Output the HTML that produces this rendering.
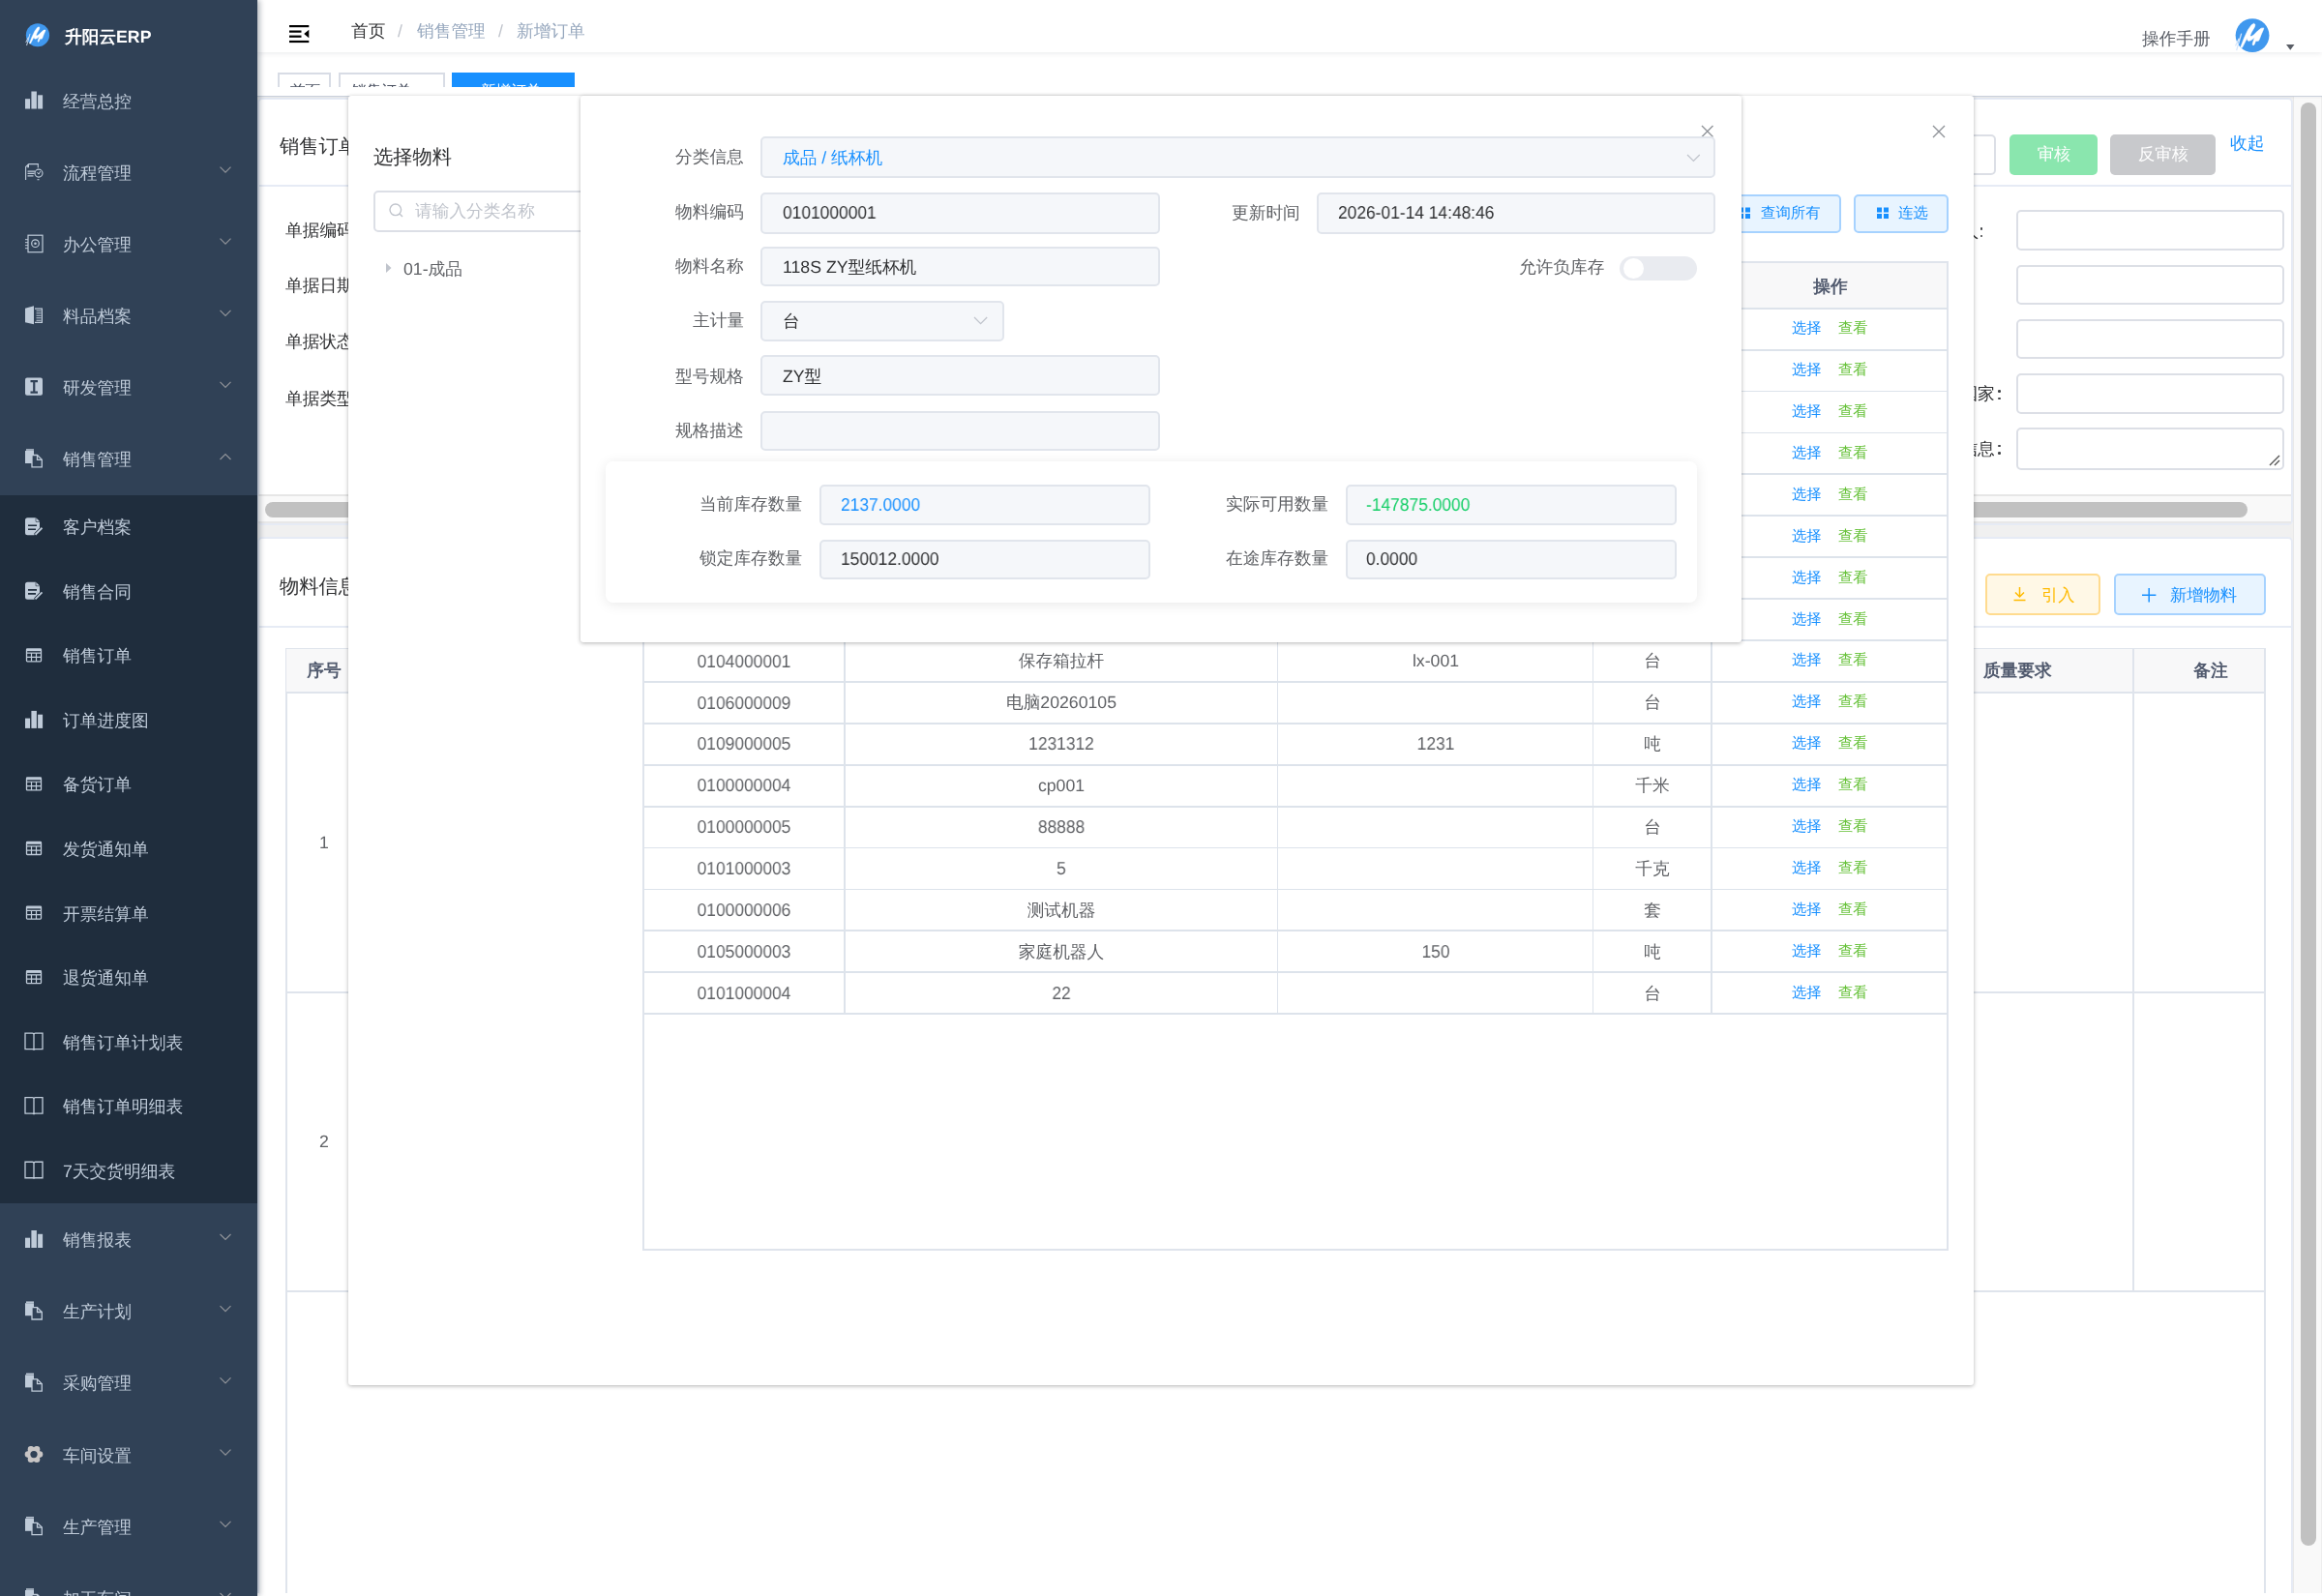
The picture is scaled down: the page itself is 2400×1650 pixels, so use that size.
<!DOCTYPE html>
<html><head><meta charset="utf-8">
<style>
*{box-sizing:border-box;margin:0;padding:0}
html,body{width:2400px;height:1650px;overflow:hidden;background:#fff;font-family:"Liberation Sans",sans-serif;font-size:18px;color:#606266}
.a{position:absolute}
.t{position:absolute;white-space:nowrap}
svg{overflow:visible}
.t{will-change:transform;text-rendering:geometricPrecision}
</style></head><body>

<div class="a" style="left:266px;top:0px;width:2134.00px;height:1650.00px;background:#f0f0f0"></div>
<div class="a" style="left:266px;top:100.5px;width:2103.60px;height:442.50px;background:#fff;border:2px solid #e6ebf5;border-radius:5px"></div>
<div class="t" style="left:289.4px;top:137.00px;height:30px;line-height:30px;font-size:20.3px;color:#303133;font-weight:normal;">销售订单</div>
<div class="a" style="left:267.4px;top:191px;width:2100.60px;height:2.00px;background:#e6ebf5"></div>
<div class="t" style="left:294.7px;top:223.30px;height:30px;line-height:30px;font-size:17.7px;color:#303133;font-weight:normal;">单据编码</div>
<div class="t" style="left:294.7px;top:279.70px;height:30px;line-height:30px;font-size:17.7px;color:#303133;font-weight:normal;">单据日期</div>
<div class="t" style="left:294.7px;top:338.00px;height:30px;line-height:30px;font-size:17.7px;color:#303133;font-weight:normal;">单据状态</div>
<div class="t" style="left:294.7px;top:396.70px;height:30px;line-height:30px;font-size:17.7px;color:#303133;font-weight:normal;">单据类型</div>
<div class="a" style="left:1990px;top:139px;width:73.00px;height:42.00px;background:#fff;border:2px solid #dcdfe6;border-radius:5px"></div>
<div class="a" style="left:2077px;top:139px;width:91.00px;height:42.00px;background:#8ae6ae;border-radius:5px"></div>
<div class="t" style="left:1822.5px;width:600px;top:143.80px;height:30px;line-height:30px;font-size:17.3px;color:#fff;font-weight:normal;text-align:center;">审核</div>
<div class="a" style="left:2181px;top:139px;width:109.00px;height:42.00px;background:#c8c9cc;border-radius:5px"></div>
<div class="t" style="left:1935.5px;width:600px;top:143.80px;height:30px;line-height:30px;font-size:17.3px;color:#fff;font-weight:normal;text-align:center;">反审核</div>
<div class="t" style="left:2305px;top:132.60px;height:30px;line-height:30px;font-size:17.8px;color:#1890ff;font-weight:normal;">收起</div>
<div class="a" style="left:2083.5px;top:216.7px;width:277.80px;height:42.30px;background:#fff;border:2px solid #dcdfe6;border-radius:5px"></div>
<div class="a" style="left:2083.5px;top:273.6px;width:277.80px;height:41.40px;background:#fff;border:2px solid #dcdfe6;border-radius:5px"></div>
<div class="a" style="left:2083.5px;top:329.6px;width:277.80px;height:41.60px;background:#fff;border:2px solid #dcdfe6;border-radius:5px"></div>
<div class="a" style="left:2083.5px;top:385.6px;width:277.80px;height:42.40px;background:#fff;border:2px solid #dcdfe6;border-radius:5px"></div>
<div class="a" style="left:2083.5px;top:441.6px;width:277.80px;height:44.50px;background:#fff;border:2px solid #dcdfe6;border-radius:5px"></div>
<div class="t" style="right:355px;top:224.00px;height:30px;line-height:30px;font-size:17.7px;color:#303133;font-weight:normal;text-align:right;">负责人</div>
<div class="a" style="left:2046.5px;top:235px;width:2.6px;height:2.6px;border-radius:50%;background:#404246"></div><div class="a" style="left:2046.5px;top:242.5px;width:2.6px;height:2.6px;border-radius:50%;background:#404246"></div>
<div class="t" style="right:338px;top:392.00px;height:30px;line-height:30px;font-size:17.7px;color:#303133;font-weight:normal;text-align:right;">所属国家</div>
<div class="a" style="left:2065px;top:403px;width:2.6px;height:2.6px;border-radius:50%;background:#404246"></div><div class="a" style="left:2065px;top:410.5px;width:2.6px;height:2.6px;border-radius:50%;background:#404246"></div>
<div class="t" style="right:338px;top:448.50px;height:30px;line-height:30px;font-size:17.7px;color:#303133;font-weight:normal;text-align:right;">备注信息</div>
<div class="a" style="left:2065px;top:459.5px;width:2.6px;height:2.6px;border-radius:50%;background:#404246"></div><div class="a" style="left:2065px;top:467px;width:2.6px;height:2.6px;border-radius:50%;background:#404246"></div>
<svg class="a" style="left:2345px;top:470px;" width="12" height="12" viewBox="0 0 12 12"><path d="M1 11 L11 1 M6 11 L11 6" stroke="#555" stroke-width="1.4"/></svg>
<div class="a" style="left:267.4px;top:511px;width:2100.60px;height:30.00px;background:#f9f9f9;border-top:2px solid #e6e6e6;border-bottom:2px solid #e8e8e8"></div>
<div class="a" style="left:274px;top:519px;width:2049.00px;height:16.00px;background:#c1c1c1;border-radius:8px"></div>
<div class="a" style="left:266px;top:555.2px;width:2103.60px;height:1144.80px;background:#fff;border:2px solid #e6ebf5;border-radius:5px"></div>
<div class="t" style="left:289.3px;top:592.40px;height:30px;line-height:30px;font-size:20.3px;color:#303133;font-weight:normal;">物料信息</div>
<div class="a" style="left:267.4px;top:647px;width:2100.60px;height:2.00px;background:#e6ebf5"></div>
<div class="a" style="left:2051.6px;top:593.3px;width:119.90px;height:43.00px;background:#fff8e6;border:2px solid #ffdb8f;border-radius:5px"></div>
<svg class="a" style="left:2080.6px;top:606px;" width="13" height="16" viewBox="0 0 13 16"><path d="M6.5 1 V11 M2 6.5 L6.5 11 L11 6.5 M0.5 14.5 H12.5" stroke="#ffba00" stroke-width="1.5" fill="none"/></svg>
<div class="t" style="left:2109.8px;top:600.00px;height:30px;line-height:30px;font-size:17.3px;color:#ffba00;font-weight:normal;">引入</div>
<div class="a" style="left:2185.4px;top:593.3px;width:156.20px;height:43.00px;background:#e8f4ff;border:2px solid #a6d2ff;border-radius:5px"></div>
<svg class="a" style="left:2214.4px;top:607.5px;" width="14.4" height="14.4" viewBox="0 0 14.4 14.4"><path d="M7.2 0 V14.4 M0 7.2 H14.4" stroke="#1890ff" stroke-width="1.5" fill="none"/></svg>
<div class="t" style="left:2243.4px;top:600.00px;height:30px;line-height:30px;font-size:17.3px;color:#1890ff;font-weight:normal;">新增物料</div>
<div class="a" style="left:295px;top:669.8px;width:2046.60px;height:1030.20px;border:2px solid #dfe4ec;background:#fff"></div>
<div class="a" style="left:296.4px;top:671.2px;width:2043.80px;height:44.80px;background:#f8f8f9"></div>
<div class="a" style="left:296.4px;top:715px;width:2043.80px;height:2.00px;background:#dfe4ec"></div>
<div class="a" style="left:296.4px;top:1024.5px;width:2043.80px;height:2.00px;background:#dfe4ec"></div>
<div class="a" style="left:296.4px;top:1333.6px;width:2043.80px;height:2.00px;background:#dfe4ec"></div>
<div class="a" style="left:2203.8px;top:671.2px;width:2.00px;height:662.80px;background:#dfe4ec"></div>
<div class="a" style="left:373.7px;top:671.2px;width:2.00px;height:662.80px;background:#dfe4ec"></div>
<div class="t" style="left:34.60000000000002px;width:600px;top:677.60px;height:30px;line-height:30px;font-size:17.7px;color:#515a6e;font-weight:bold;text-align:center;">序号</div>
<div class="t" style="left:2050px;top:677.60px;height:30px;line-height:30px;font-size:17.7px;color:#515a6e;font-weight:bold;">质量要求</div>
<div class="t" style="left:1985px;width:600px;top:677.60px;height:30px;line-height:30px;font-size:17.7px;color:#515a6e;font-weight:bold;text-align:center;">备注</div>
<div class="t" style="left:34.60000000000002px;width:600px;top:855.60px;height:30px;line-height:30px;font-size:17.7px;color:#606266;font-weight:normal;text-align:center;">1</div>
<div class="t" style="left:34.60000000000002px;width:600px;top:1164.50px;height:30px;line-height:30px;font-size:17.7px;color:#606266;font-weight:normal;text-align:center;">2</div>
<div class="a" style="left:266px;top:1647px;width:2134.00px;height:3.00px;background:#fff"></div>
<div class="a" style="left:2370.4px;top:99.5px;width:29.60px;height:1547.50px;background:#f9f9f9;border-left:1.6px solid #e8e8e8;border-right:1.6px solid #eeeeee"></div>
<div class="a" style="left:2378.2px;top:106px;width:15.50px;height:1492.00px;background:#c1c1c1;border-radius:8px"></div>
<div class="a" style="left:266px;top:54px;width:2134.00px;height:45.80px;background:#fff;border-bottom:1.6px solid #c9d0db;box-shadow:0 1px 2px rgba(0,21,41,.05)"></div>
<div class="a" style="left:266px;top:54px;width:2134px;height:36px;overflow:hidden">
<div class="a" style="left:21px;top:21px;width:55px;height:34px;border:2px solid #d8dce5;background:#fff"></div>
<div class="t" style="left:33.8px;top:31px;height:20px;line-height:20px;font-size:15.6px;color:#495060">首页</div>
<div class="a" style="left:84px;top:21px;width:110px;height:34px;border:2px solid #d8dce5;background:#fff"></div>
<div class="t" style="left:96.7px;top:31px;height:20px;line-height:20px;font-size:15.6px;color:#495060">销售订单</div>
<div class="a" style="left:200.7px;top:21px;width:127.3px;height:34px;background:#1890ff"></div>
<div class="a" style="left:217.5px;top:36px;width:10.5px;height:10.5px;border-radius:50%;background:#fff"></div>
<div class="t" style="left:230.7px;top:31px;height:20px;line-height:20px;font-size:15.6px;color:#fff">新增订单</div>
</div>
<div class="a" style="left:266px;top:0px;width:2134.00px;height:54.00px;background:#fff;box-shadow:0 1px 6px rgba(0,21,41,.09)"></div>
<svg class="a" style="left:298.7px;top:25.8px;" width="20.3" height="18.1" viewBox="0 0 20.3 18.1"><rect x="0" y="0" width="20.3" height="2.2" fill="#000"/><rect x="0" y="5.5" width="12.5" height="2.2" fill="#000"/><rect x="0" y="10.6" width="12.5" height="2.2" fill="#000"/><rect x="0" y="15.9" width="20.3" height="2.2" fill="#000"/><path d="M20.3 4.8 V13.3 L15.2 9 Z" fill="#000"/></svg>
<div class="t" style="left:363.3px;top:16.80px;height:30px;line-height:30px;font-size:17.7px;color:#303133;font-weight:normal;">首页</div>
<div class="t" style="left:410.7px;top:16.80px;height:30px;line-height:30px;font-size:17.7px;color:#c0c4cc;font-weight:normal;">/</div>
<div class="t" style="left:430.5px;top:16.80px;height:30px;line-height:30px;font-size:17.7px;color:#97a8be;font-weight:normal;">销售管理</div>
<div class="t" style="left:515px;top:16.80px;height:30px;line-height:30px;font-size:17.7px;color:#c0c4cc;font-weight:normal;">/</div>
<div class="t" style="left:534px;top:16.80px;height:30px;line-height:30px;font-size:17.7px;color:#97a8be;font-weight:normal;">新增订单</div>
<div class="t" style="left:2214px;top:24.90px;height:30px;line-height:30px;font-size:17.7px;color:#5a5e66;font-weight:normal;">操作手册</div>
<svg class="a" style="left:0px;top:0px;" width="2400" height="60" viewBox="0 0 2400 60"><circle cx="2328.06" cy="36.6" r="17.4" fill="#4098ee"/><g transform="translate(2328.06,36.6) scale(1.4380165289256197)"><path d="M-8.64,8.8 L-5.97,1.89 L-3.14,-4.08 L-0.63,-7.54 L1.1,-8.56 L2.04,-7.7 L1.57,-5.97 L-0.63,-2.2 L-1.57,0 L-0.94,0.86 L0.79,-0.16 L3.93,-3.3 L6.28,-5.18 L8.17,-5.34 L7.86,-4.08 L6.28,-0.47 L5.03,2.83 L4.4,3.93 L2.36,4.08 L1.41,6.6 L0.63,7.23 L0,6.6 L0.63,4.24 L1.57,1.41 L-0.79,3.46 L-2.67,4.08 L-3.61,3.46 L-3.77,1.89 L-5.81,5.81 L-7.38,8.8 Z" fill="#fff" stroke="#fff" stroke-width="0.4" stroke-linejoin="round"/><path d="M-7.9 -1.4 L-11.4 10.8 M-9.6 2.2 L-12.2 7.6" stroke="#d6e7fb" stroke-width="0.9" fill="none"/></g></svg>
<svg class="a" style="left:2362.5px;top:46.3px;" width="8.5" height="5.7" viewBox="0 0 8.5 5.7"><path d="M0 0 H8.5 L4.25 5.7 Z" fill="#5a5e66"/></svg>
<div class="a" style="left:0px;top:0px;width:266.00px;height:1650.00px;background:#304156;box-shadow:2px 0 6px rgba(0,21,41,.35)"></div>
<div class="a" style="left:0px;top:512px;width:266.00px;height:732.00px;background:#1f2d3d"></div>
<svg class="a" style="left:0px;top:0px;" width="266" height="70" viewBox="0 0 266 70"><circle cx="38.95" cy="36.25" r="12.1" fill="#4098ee"/><g transform="translate(38.95,36.25) scale(1.0)"><path d="M-8.64,8.8 L-5.97,1.89 L-3.14,-4.08 L-0.63,-7.54 L1.1,-8.56 L2.04,-7.7 L1.57,-5.97 L-0.63,-2.2 L-1.57,0 L-0.94,0.86 L0.79,-0.16 L3.93,-3.3 L6.28,-5.18 L8.17,-5.34 L7.86,-4.08 L6.28,-0.47 L5.03,2.83 L4.4,3.93 L2.36,4.08 L1.41,6.6 L0.63,7.23 L0,6.6 L0.63,4.24 L1.57,1.41 L-0.79,3.46 L-2.67,4.08 L-3.61,3.46 L-3.77,1.89 L-5.81,5.81 L-7.38,8.8 Z" fill="#fff" stroke="#fff" stroke-width="0.4" stroke-linejoin="round"/><path d="M-7.9 -1.4 L-11.4 10.8 M-9.6 2.2 L-12.2 7.6" stroke="#d6e7fb" stroke-width="0.9" fill="none"/></g></svg>
<div class="t" style="left:67px;top:23.00px;height:30px;line-height:30px;font-size:17.7px;color:#fff;font-weight:bold;">升阳云ERP</div>
<div class="t" style="left:65px;top:89.50px;height:30px;line-height:30px;font-size:17.75px;color:#bfcbd9;font-weight:normal;">经营总控</div>
<div class="t" style="left:65px;top:163.60px;height:30px;line-height:30px;font-size:17.75px;color:#bfcbd9;font-weight:normal;">流程管理</div>
<div class="t" style="left:65px;top:237.70px;height:30px;line-height:30px;font-size:17.75px;color:#bfcbd9;font-weight:normal;">办公管理</div>
<div class="t" style="left:65px;top:311.80px;height:30px;line-height:30px;font-size:17.75px;color:#bfcbd9;font-weight:normal;">料品档案</div>
<div class="t" style="left:65px;top:385.90px;height:30px;line-height:30px;font-size:17.75px;color:#bfcbd9;font-weight:normal;">研发管理</div>
<div class="t" style="left:65px;top:460.00px;height:30px;line-height:30px;font-size:17.75px;color:#bfcbd9;font-weight:normal;">销售管理</div>
<div class="t" style="left:65px;top:530.25px;height:30px;line-height:30px;font-size:17.75px;color:#bfcbd9;font-weight:normal;">客户档案</div>
<div class="t" style="left:65px;top:596.80px;height:30px;line-height:30px;font-size:17.75px;color:#bfcbd9;font-weight:normal;">销售合同</div>
<div class="t" style="left:65px;top:663.35px;height:30px;line-height:30px;font-size:17.75px;color:#bfcbd9;font-weight:normal;">销售订单</div>
<div class="t" style="left:65px;top:729.90px;height:30px;line-height:30px;font-size:17.75px;color:#bfcbd9;font-weight:normal;">订单进度图</div>
<div class="t" style="left:65px;top:796.45px;height:30px;line-height:30px;font-size:17.75px;color:#bfcbd9;font-weight:normal;">备货订单</div>
<div class="t" style="left:65px;top:863.00px;height:30px;line-height:30px;font-size:17.75px;color:#bfcbd9;font-weight:normal;">发货通知单</div>
<div class="t" style="left:65px;top:929.55px;height:30px;line-height:30px;font-size:17.75px;color:#bfcbd9;font-weight:normal;">开票结算单</div>
<div class="t" style="left:65px;top:996.10px;height:30px;line-height:30px;font-size:17.75px;color:#bfcbd9;font-weight:normal;">退货通知单</div>
<div class="t" style="left:65px;top:1062.65px;height:30px;line-height:30px;font-size:17.75px;color:#bfcbd9;font-weight:normal;">销售订单计划表</div>
<div class="t" style="left:65px;top:1129.20px;height:30px;line-height:30px;font-size:17.75px;color:#bfcbd9;font-weight:normal;">销售订单明细表</div>
<div class="t" style="left:65px;top:1195.75px;height:30px;line-height:30px;font-size:17.75px;color:#bfcbd9;font-weight:normal;">7天交货明细表</div>
<div class="t" style="left:65px;top:1267.00px;height:30px;line-height:30px;font-size:17.75px;color:#bfcbd9;font-weight:normal;">销售报表</div>
<div class="t" style="left:65px;top:1341.20px;height:30px;line-height:30px;font-size:17.75px;color:#bfcbd9;font-weight:normal;">生产计划</div>
<div class="t" style="left:65px;top:1415.40px;height:30px;line-height:30px;font-size:17.75px;color:#bfcbd9;font-weight:normal;">采购管理</div>
<div class="t" style="left:65px;top:1489.60px;height:30px;line-height:30px;font-size:17.75px;color:#bfcbd9;font-weight:normal;">车间设置</div>
<div class="t" style="left:65px;top:1563.80px;height:30px;line-height:30px;font-size:17.75px;color:#bfcbd9;font-weight:normal;">生产管理</div>
<div class="t" style="left:65px;top:1638.00px;height:30px;line-height:30px;font-size:17.75px;color:#bfcbd9;font-weight:normal;">加工车间</div>
<svg class="a" style="left:0px;top:0px;" width="266" height="1650" viewBox="0 0 266 1650"><rect x="26" y="102.2" width="5.1" height="10.3" fill="#bfcbd9"/><rect x="32.4" y="94.5" width="5.5" height="18" fill="#bfcbd9"/><rect x="39.1" y="98.3" width="5" height="14.2" fill="#bfcbd9"/><path d="M26.6 186.1 v-13.5 l3.2 -3 h9.5 v4" fill="none" stroke="#bfcbd9" stroke-width="1.1"/><rect x="28.2" y="169.9" width="1.8" height="3.4" fill="#bfcbd9"/><path d="M28.5 177.1 h7.5 M28.5 179.4 h7 M28.5 181.9 h6" stroke="#bfcbd9" stroke-width="1.1"/><circle cx="40" cy="179.1" r="4" fill="none" stroke="#bfcbd9" stroke-width="1.1"/><path d="M38.5 178.1 l1.5 2 l1.8 -3" fill="none" stroke="#bfcbd9" stroke-width="1"/><path d="M38.5 185.7 h2" stroke="#bfcbd9" stroke-width="1.1"/><path d="M227.5 172.6 L233.0 178.1 L238.5 172.6" fill="none" stroke="#909399" stroke-width="1.2"/><rect x="29" y="243.2" width="15" height="17.5" fill="none" stroke="#bfcbd9" stroke-width="1.2"/><circle cx="36.5" cy="251.7" r="3.8" fill="none" stroke="#bfcbd9" stroke-width="1.2"/><circle cx="36.5" cy="251.7" r="1.3" fill="#bfcbd9"/><path d="M26 247.7 h3 M26 250.7 h3 M26 253.7 h3 M26 256.7 h3" stroke="#bfcbd9" stroke-width="1"/><path d="M227.5 246.7 L233.0 252.2 L238.5 246.7" fill="none" stroke="#909399" stroke-width="1.2"/><path d="M26 318.8 l9 -2.5 v19 l-9 -2 z" fill="#bfcbd9"/><path d="M36 319.1 h7.4 v14.2 h-7.4" fill="none" stroke="#bfcbd9" stroke-width="1.2"/><path d="M37.5 321.3 h5 M37.5 323.8 h5 M37.5 326.3 h5 M37.5 328.8 h5 M37.5 331.3 h5" stroke="#bfcbd9" stroke-width="1.1"/><path d="M227.5 320.8 L233.0 326.3 L238.5 320.8" fill="none" stroke="#909399" stroke-width="1.2"/><rect x="26" y="390.59999999999997" width="18" height="18.2" rx="2" fill="#bfcbd9"/><path d="M31.5 394.09999999999997 h7.5 M31.5 405.59999999999997 h7.5 M35.25 394.09999999999997 v11.5" stroke="#304156" stroke-width="2.2"/><path d="M227.5 394.9 L233.0 400.4 L238.5 394.9" fill="none" stroke="#909399" stroke-width="1.2"/><path d="M26 466.0 h9 v13 h-9 z" fill="#bfcbd9"/><path d="M27 465.0 h8" stroke="#bfcbd9" stroke-width="1.5"/><path d="M33 470.5 h5.5 l4.8 4.8 v7.5 h-10.3 z" fill="#304156" stroke="#bfcbd9" stroke-width="1.3"/><path d="M38.5 470.5 v4.8 h4.8" fill="none" stroke="#bfcbd9" stroke-width="1.3"/><path d="M227.5 475.0 L233.0 469.5 L238.5 475.0" fill="none" stroke="#909399" stroke-width="1.2"/><path d="M26 537.75 q0 -2.5 2.5 -2.5 h8.5 l4 4 v7 l-5.5 5.5 v1.5 h-7 q-2.5 0 -2.5 -2.5 z" fill="#bfcbd9"/><path d="M37 535.25 v4 h4" fill="#1f2d3d" stroke="#1f2d3d" stroke-width="0.6"/><path d="M37.3 535.45 l3.6 3.6 h-3.6 z" fill="#bfcbd9"/><path d="M29 543.25 h9 M29 547.25 h8" stroke="#1f2d3d" stroke-width="1.7"/><path d="M36.5 552.75 l7 -7" stroke="#1f2d3d" stroke-width="3.2"/><path d="M36.5 552.75 l7 -7" stroke="#bfcbd9" stroke-width="1.8"/><path d="M26 604.3 q0 -2.5 2.5 -2.5 h8.5 l4 4 v7 l-5.5 5.5 v1.5 h-7 q-2.5 0 -2.5 -2.5 z" fill="#bfcbd9"/><path d="M37 601.8 v4 h4" fill="#1f2d3d" stroke="#1f2d3d" stroke-width="0.6"/><path d="M37.3 602.0 l3.6 3.6 h-3.6 z" fill="#bfcbd9"/><path d="M29 609.8 h9 M29 613.8 h8" stroke="#1f2d3d" stroke-width="1.7"/><path d="M36.5 619.3 l7 -7" stroke="#1f2d3d" stroke-width="3.2"/><path d="M36.5 619.3 l7 -7" stroke="#bfcbd9" stroke-width="1.8"/><rect x="27.5" y="670.85" width="15" height="13" rx="0.8" fill="none" stroke="#bfcbd9" stroke-width="1.3"/><path d="M27.5 672.0500000000001 h15" stroke="#bfcbd9" stroke-width="2.2"/><path d="M27.5 675.15 h15 M27.5 679.45 h15 M32.5 675.15 v8.7 M37.5 675.15 v8.7" stroke="#bfcbd9" stroke-width="1.2"/><rect x="26" y="742.6" width="5.1" height="10.3" fill="#bfcbd9"/><rect x="32.4" y="734.9" width="5.5" height="18" fill="#bfcbd9"/><rect x="39.1" y="738.6999999999999" width="5" height="14.2" fill="#bfcbd9"/><rect x="27.5" y="803.95" width="15" height="13" rx="0.8" fill="none" stroke="#bfcbd9" stroke-width="1.3"/><path d="M27.5 805.1500000000001 h15" stroke="#bfcbd9" stroke-width="2.2"/><path d="M27.5 808.25 h15 M27.5 812.5500000000001 h15 M32.5 808.25 v8.7 M37.5 808.25 v8.7" stroke="#bfcbd9" stroke-width="1.2"/><rect x="27.5" y="870.5" width="15" height="13" rx="0.8" fill="none" stroke="#bfcbd9" stroke-width="1.3"/><path d="M27.5 871.7 h15" stroke="#bfcbd9" stroke-width="2.2"/><path d="M27.5 874.8 h15 M27.5 879.1 h15 M32.5 874.8 v8.7 M37.5 874.8 v8.7" stroke="#bfcbd9" stroke-width="1.2"/><rect x="27.5" y="937.05" width="15" height="13" rx="0.8" fill="none" stroke="#bfcbd9" stroke-width="1.3"/><path d="M27.5 938.25 h15" stroke="#bfcbd9" stroke-width="2.2"/><path d="M27.5 941.3499999999999 h15 M27.5 945.65 h15 M32.5 941.3499999999999 v8.7 M37.5 941.3499999999999 v8.7" stroke="#bfcbd9" stroke-width="1.2"/><rect x="27.5" y="1003.5999999999999" width="15" height="13" rx="0.8" fill="none" stroke="#bfcbd9" stroke-width="1.3"/><path d="M27.5 1004.8 h15" stroke="#bfcbd9" stroke-width="2.2"/><path d="M27.5 1007.8999999999999 h15 M27.5 1012.1999999999999 h15 M32.5 1007.8999999999999 v8.7 M37.5 1007.8999999999999 v8.7" stroke="#bfcbd9" stroke-width="1.2"/><path d="M26 1068.15 h7.5 q1.5 0 1.5 1.5 v16 q0 -1 -1.5 -1 h-7.5 z M44 1068.15 h-7.5 q-1.5 0 -1.5 1.5 v16 q0 -1 1.5 -1 h7.5 z" fill="none" stroke="#bfcbd9" stroke-width="1.3"/><path d="M26 1134.6999999999998 h7.5 q1.5 0 1.5 1.5 v16 q0 -1 -1.5 -1 h-7.5 z M44 1134.6999999999998 h-7.5 q-1.5 0 -1.5 1.5 v16 q0 -1 1.5 -1 h7.5 z" fill="none" stroke="#bfcbd9" stroke-width="1.3"/><path d="M26 1201.25 h7.5 q1.5 0 1.5 1.5 v16 q0 -1 -1.5 -1 h-7.5 z M44 1201.25 h-7.5 q-1.5 0 -1.5 1.5 v16 q0 -1 1.5 -1 h7.5 z" fill="none" stroke="#bfcbd9" stroke-width="1.3"/><rect x="26" y="1279.7" width="5.1" height="10.3" fill="#bfcbd9"/><rect x="32.4" y="1272.0" width="5.5" height="18" fill="#bfcbd9"/><rect x="39.1" y="1275.8" width="5" height="14.2" fill="#bfcbd9"/><path d="M227.5 1276.0 L233.0 1281.5 L238.5 1276.0" fill="none" stroke="#909399" stroke-width="1.2"/><path d="M26 1347.2 h9 v13 h-9 z" fill="#bfcbd9"/><path d="M27 1346.2 h8" stroke="#bfcbd9" stroke-width="1.5"/><path d="M33 1351.7 h5.5 l4.8 4.8 v7.5 h-10.3 z" fill="#304156" stroke="#bfcbd9" stroke-width="1.3"/><path d="M38.5 1351.7 v4.8 h4.8" fill="none" stroke="#bfcbd9" stroke-width="1.3"/><path d="M227.5 1350.2 L233.0 1355.7 L238.5 1350.2" fill="none" stroke="#909399" stroke-width="1.2"/><path d="M26 1421.4 h9 v13 h-9 z" fill="#bfcbd9"/><path d="M27 1420.4 h8" stroke="#bfcbd9" stroke-width="1.5"/><path d="M33 1425.9 h5.5 l4.8 4.8 v7.5 h-10.3 z" fill="#304156" stroke="#bfcbd9" stroke-width="1.3"/><path d="M38.5 1425.9 v4.8 h4.8" fill="none" stroke="#bfcbd9" stroke-width="1.3"/><path d="M227.5 1424.4 L233.0 1429.9 L238.5 1424.4" fill="none" stroke="#909399" stroke-width="1.2"/><circle cx="41.00" cy="1503.60" r="3.3" fill="#c8c5c5"/><circle cx="38.00" cy="1508.80" r="3.3" fill="#c8c5c5"/><circle cx="32.00" cy="1508.80" r="3.3" fill="#c8c5c5"/><circle cx="29.00" cy="1503.60" r="3.3" fill="#c8c5c5"/><circle cx="32.00" cy="1498.40" r="3.3" fill="#c8c5c5"/><circle cx="38.00" cy="1498.40" r="3.3" fill="#c8c5c5"/><circle cx="35" cy="1503.6" r="7" fill="#c8c5c5"/><circle cx="35" cy="1503.6" r="3.6" fill="#304156"/><path d="M227.5 1498.6 L233.0 1504.1 L238.5 1498.6" fill="none" stroke="#909399" stroke-width="1.2"/><path d="M26 1569.8 h9 v13 h-9 z" fill="#bfcbd9"/><path d="M27 1568.8 h8" stroke="#bfcbd9" stroke-width="1.5"/><path d="M33 1574.3 h5.5 l4.8 4.8 v7.5 h-10.3 z" fill="#304156" stroke="#bfcbd9" stroke-width="1.3"/><path d="M38.5 1574.3 v4.8 h4.8" fill="none" stroke="#bfcbd9" stroke-width="1.3"/><path d="M227.5 1572.8 L233.0 1578.3 L238.5 1572.8" fill="none" stroke="#909399" stroke-width="1.2"/><path d="M26 1644.0 h9 v13 h-9 z" fill="#bfcbd9"/><path d="M27 1643.0 h8" stroke="#bfcbd9" stroke-width="1.5"/><path d="M33 1648.5 h5.5 l4.8 4.8 v7.5 h-10.3 z" fill="#304156" stroke="#bfcbd9" stroke-width="1.3"/><path d="M38.5 1648.5 v4.8 h4.8" fill="none" stroke="#bfcbd9" stroke-width="1.3"/><path d="M227.5 1647.0 L233.0 1652.5 L238.5 1647.0" fill="none" stroke="#909399" stroke-width="1.2"/></svg>
<div class="a" style="left:360px;top:99px;width:1680.00px;height:1333.00px;background:#fff;border-radius:3px;box-shadow:0 1px 4px rgba(0,0,0,.30)"></div>
<div class="t" style="left:386px;top:147.70px;height:30px;line-height:30px;font-size:20.3px;color:#303133;font-weight:normal;">选择物料</div>
<svg class="a" style="left:1998.2px;top:130px;" width="12" height="12" viewBox="0 0 12 12"><path d="M0 0 L12 12 M12 0 L0 12" stroke="#909399" stroke-width="1.4"/></svg>
<div class="a" style="left:386px;top:197px;width:314.00px;height:42.50px;background:#fff;border:2px solid #dcdfe6;border-radius:5px"></div>
<svg class="a" style="left:402px;top:210px;" width="15" height="15" viewBox="0 0 15 15"><circle cx="6.8" cy="6.8" r="5.8" fill="none" stroke="#c0c4cc" stroke-width="1.4"/><path d="M11 11 L14 14" stroke="#c0c4cc" stroke-width="1.4"/></svg>
<div class="t" style="left:428.8px;top:203.00px;height:30px;line-height:30px;font-size:17.7px;color:#c0c4cc;font-weight:normal;">请输入分类名称</div>
<svg class="a" style="left:399px;top:272px;" width="6" height="10" viewBox="0 0 6 10"><path d="M0 0 L5.5 5 L0 10 Z" fill="#c0c4cc"/></svg>
<div class="t" style="left:416.6px;top:262.70px;height:30px;line-height:30px;font-size:17.7px;color:#606266;font-weight:normal;">01-成品</div>
<div class="a" style="left:1776px;top:201.4px;width:126.50px;height:39.30px;background:#e8f4ff;border:2px solid #a6d2ff;border-radius:5px"></div>
<div class="a" style="left:1916.2px;top:201.4px;width:97.60px;height:39.30px;background:#e8f4ff;border:2px solid #a6d2ff;border-radius:5px"></div>
<svg class="a" style="left:0px;top:0px;" width="2400" height="260" viewBox="0 0 2400 260"><rect x="1797" y="214.5" width="5" height="5" fill="#1890ff"/><rect x="1804" y="214.5" width="5" height="5" fill="#1890ff"/><rect x="1797" y="221.0" width="5" height="5" fill="#1890ff"/><rect x="1804" y="221.0" width="5" height="5" fill="#1890ff"/><rect x="1940" y="214.5" width="5" height="5" fill="#1890ff"/><rect x="1947" y="214.5" width="5" height="5" fill="#1890ff"/><rect x="1940" y="221.0" width="5" height="5" fill="#1890ff"/><rect x="1947" y="221.0" width="5" height="5" fill="#1890ff"/></svg>
<div class="t" style="left:1819.5px;top:206.00px;height:30px;line-height:30px;font-size:15.4px;color:#1890ff;font-weight:normal;">查询所有</div>
<div class="t" style="left:1962.3px;top:206.00px;height:30px;line-height:30px;font-size:15.4px;color:#1890ff;font-weight:normal;">连选</div>
<div class="a" style="left:664.2px;top:270.3px;width:1349.80px;height:1023.20px;border:2px solid #dfe4ec;background:#fff"></div>
<div class="a" style="left:666.2px;top:272.3px;width:1345.80px;height:45.70px;background:#f8f8f9"></div>
<div class="a" style="left:665.6px;top:317.8px;width:1347.00px;height:1.80px;background:#dde3eb"></div>
<div class="a" style="left:665.6px;top:360.71000000000004px;width:1347.00px;height:1.80px;background:#dde3eb"></div>
<div class="a" style="left:665.6px;top:403.62px;width:1347.00px;height:1.80px;background:#dde3eb"></div>
<div class="a" style="left:665.6px;top:446.53px;width:1347.00px;height:1.80px;background:#dde3eb"></div>
<div class="a" style="left:665.6px;top:489.44px;width:1347.00px;height:1.80px;background:#dde3eb"></div>
<div class="a" style="left:665.6px;top:532.35px;width:1347.00px;height:1.80px;background:#dde3eb"></div>
<div class="a" style="left:665.6px;top:575.26px;width:1347.00px;height:1.80px;background:#dde3eb"></div>
<div class="a" style="left:665.6px;top:618.17px;width:1347.00px;height:1.80px;background:#dde3eb"></div>
<div class="a" style="left:665.6px;top:661.08px;width:1347.00px;height:1.80px;background:#dde3eb"></div>
<div class="a" style="left:665.6px;top:703.9899999999999px;width:1347.00px;height:1.80px;background:#dde3eb"></div>
<div class="a" style="left:665.6px;top:746.9px;width:1347.00px;height:1.80px;background:#dde3eb"></div>
<div class="a" style="left:665.6px;top:789.8100000000001px;width:1347.00px;height:1.80px;background:#dde3eb"></div>
<div class="a" style="left:665.6px;top:832.7199999999999px;width:1347.00px;height:1.80px;background:#dde3eb"></div>
<div class="a" style="left:665.6px;top:875.63px;width:1347.00px;height:1.80px;background:#dde3eb"></div>
<div class="a" style="left:665.6px;top:918.5400000000001px;width:1347.00px;height:1.80px;background:#dde3eb"></div>
<div class="a" style="left:665.6px;top:961.4499999999999px;width:1347.00px;height:1.80px;background:#dde3eb"></div>
<div class="a" style="left:665.6px;top:1004.36px;width:1347.00px;height:1.80px;background:#dde3eb"></div>
<div class="a" style="left:665.6px;top:1047.2699999999998px;width:1347.00px;height:1.80px;background:#dde3eb"></div>
<div class="a" style="left:872.3000000000001px;top:272.7px;width:1.80px;height:775.47px;background:#dde3eb"></div>
<div class="a" style="left:1319.6px;top:272.7px;width:1.80px;height:775.47px;background:#dde3eb"></div>
<div class="a" style="left:1645.6999999999998px;top:272.7px;width:1.80px;height:775.47px;background:#dde3eb"></div>
<div class="a" style="left:1768.1px;top:272.7px;width:1.80px;height:775.47px;background:#dde3eb"></div>
<div class="t" style="left:468.70000000000005px;width:600px;top:280.90px;height:30px;line-height:30px;font-size:17.7px;color:#515a6e;font-weight:bold;text-align:center;">物料编码</div>
<div class="t" style="left:796.8499999999999px;width:600px;top:280.90px;height:30px;line-height:30px;font-size:17.7px;color:#515a6e;font-weight:bold;text-align:center;">物料名称</div>
<div class="t" style="left:1183.55px;width:600px;top:280.90px;height:30px;line-height:30px;font-size:17.7px;color:#515a6e;font-weight:bold;text-align:center;">规格型号</div>
<div class="t" style="left:1407.8px;width:600px;top:280.90px;height:30px;line-height:30px;font-size:17.7px;color:#515a6e;font-weight:bold;text-align:center;">单位</div>
<div class="t" style="left:1591.5px;width:600px;top:280.90px;height:30px;line-height:30px;font-size:17.7px;color:#515a6e;font-weight:bold;text-align:center;">操作</div>
<div class="t" style="left:468.70000000000005px;width:600px;top:325.35px;height:30px;line-height:30px;font-size:18.6px;color:#606266;text-align:center;transform:scaleX(0.935);transform-origin:50% 50%">0101000001</div>
<div class="t" style="left:796.8499999999999px;width:600px;top:325.15px;height:30px;line-height:30px;font-size:17.7px;color:#606266;font-weight:normal;text-align:center;">118S ZY型纸杯机</div>
<div class="t" style="left:1183.55px;width:600px;top:325.15px;height:30px;line-height:30px;font-size:17.7px;color:#606266;font-weight:normal;text-align:center;">ZY型</div>
<div class="t" style="left:1407.8px;width:600px;top:325.15px;height:30px;line-height:30px;font-size:17.7px;color:#606266;font-weight:normal;text-align:center;">台</div>
<div class="t" style="left:1852.4px;top:325.15px;height:30px;line-height:30px;font-size:15.3px;color:#1890ff;font-weight:normal;">选择</div>
<div class="t" style="left:1900px;top:325.15px;height:30px;line-height:30px;font-size:15.3px;color:#67c23a;font-weight:normal;">查看</div>
<div class="t" style="left:468.70000000000005px;width:600px;top:368.26px;height:30px;line-height:30px;font-size:18.6px;color:#606266;text-align:center;transform:scaleX(0.935);transform-origin:50% 50%">0101000002</div>
<div class="t" style="left:796.8499999999999px;width:600px;top:368.06px;height:30px;line-height:30px;font-size:17.7px;color:#606266;font-weight:normal;text-align:center;">纸杯机A</div>
<div class="t" style="left:1407.8px;width:600px;top:368.06px;height:30px;line-height:30px;font-size:17.7px;color:#606266;font-weight:normal;text-align:center;">台</div>
<div class="t" style="left:1852.4px;top:368.06px;height:30px;line-height:30px;font-size:15.3px;color:#1890ff;font-weight:normal;">选择</div>
<div class="t" style="left:1900px;top:368.06px;height:30px;line-height:30px;font-size:15.3px;color:#67c23a;font-weight:normal;">查看</div>
<div class="t" style="left:468.70000000000005px;width:600px;top:411.17px;height:30px;line-height:30px;font-size:18.6px;color:#606266;text-align:center;transform:scaleX(0.935);transform-origin:50% 50%">0102000001</div>
<div class="t" style="left:796.8499999999999px;width:600px;top:410.97px;height:30px;line-height:30px;font-size:17.7px;color:#606266;font-weight:normal;text-align:center;">打包机</div>
<div class="t" style="left:1407.8px;width:600px;top:410.97px;height:30px;line-height:30px;font-size:17.7px;color:#606266;font-weight:normal;text-align:center;">台</div>
<div class="t" style="left:1852.4px;top:410.97px;height:30px;line-height:30px;font-size:15.3px;color:#1890ff;font-weight:normal;">选择</div>
<div class="t" style="left:1900px;top:410.97px;height:30px;line-height:30px;font-size:15.3px;color:#67c23a;font-weight:normal;">查看</div>
<div class="t" style="left:468.70000000000005px;width:600px;top:454.08px;height:30px;line-height:30px;font-size:18.6px;color:#606266;text-align:center;transform:scaleX(0.935);transform-origin:50% 50%">0102000002</div>
<div class="t" style="left:796.8499999999999px;width:600px;top:453.88px;height:30px;line-height:30px;font-size:17.7px;color:#606266;font-weight:normal;text-align:center;">封箱机</div>
<div class="t" style="left:1407.8px;width:600px;top:453.88px;height:30px;line-height:30px;font-size:17.7px;color:#606266;font-weight:normal;text-align:center;">台</div>
<div class="t" style="left:1852.4px;top:453.88px;height:30px;line-height:30px;font-size:15.3px;color:#1890ff;font-weight:normal;">选择</div>
<div class="t" style="left:1900px;top:453.88px;height:30px;line-height:30px;font-size:15.3px;color:#67c23a;font-weight:normal;">查看</div>
<div class="t" style="left:468.70000000000005px;width:600px;top:496.99px;height:30px;line-height:30px;font-size:18.6px;color:#606266;text-align:center;transform:scaleX(0.935);transform-origin:50% 50%">0103000001</div>
<div class="t" style="left:796.8499999999999px;width:600px;top:496.79px;height:30px;line-height:30px;font-size:17.7px;color:#606266;font-weight:normal;text-align:center;">包装机</div>
<div class="t" style="left:1407.8px;width:600px;top:496.79px;height:30px;line-height:30px;font-size:17.7px;color:#606266;font-weight:normal;text-align:center;">台</div>
<div class="t" style="left:1852.4px;top:496.79px;height:30px;line-height:30px;font-size:15.3px;color:#1890ff;font-weight:normal;">选择</div>
<div class="t" style="left:1900px;top:496.79px;height:30px;line-height:30px;font-size:15.3px;color:#67c23a;font-weight:normal;">查看</div>
<div class="t" style="left:468.70000000000005px;width:600px;top:539.91px;height:30px;line-height:30px;font-size:18.6px;color:#606266;text-align:center;transform:scaleX(0.935);transform-origin:50% 50%">0103000002</div>
<div class="t" style="left:796.8499999999999px;width:600px;top:539.71px;height:30px;line-height:30px;font-size:17.7px;color:#606266;font-weight:normal;text-align:center;">贴标机</div>
<div class="t" style="left:1407.8px;width:600px;top:539.71px;height:30px;line-height:30px;font-size:17.7px;color:#606266;font-weight:normal;text-align:center;">台</div>
<div class="t" style="left:1852.4px;top:539.71px;height:30px;line-height:30px;font-size:15.3px;color:#1890ff;font-weight:normal;">选择</div>
<div class="t" style="left:1900px;top:539.71px;height:30px;line-height:30px;font-size:15.3px;color:#67c23a;font-weight:normal;">查看</div>
<div class="t" style="left:468.70000000000005px;width:600px;top:582.82px;height:30px;line-height:30px;font-size:18.6px;color:#606266;text-align:center;transform:scaleX(0.935);transform-origin:50% 50%">0104000002</div>
<div class="t" style="left:796.8499999999999px;width:600px;top:582.62px;height:30px;line-height:30px;font-size:17.7px;color:#606266;font-weight:normal;text-align:center;">保存箱</div>
<div class="t" style="left:1407.8px;width:600px;top:582.62px;height:30px;line-height:30px;font-size:17.7px;color:#606266;font-weight:normal;text-align:center;">台</div>
<div class="t" style="left:1852.4px;top:582.62px;height:30px;line-height:30px;font-size:15.3px;color:#1890ff;font-weight:normal;">选择</div>
<div class="t" style="left:1900px;top:582.62px;height:30px;line-height:30px;font-size:15.3px;color:#67c23a;font-weight:normal;">查看</div>
<div class="t" style="left:468.70000000000005px;width:600px;top:625.73px;height:30px;line-height:30px;font-size:18.6px;color:#606266;text-align:center;transform:scaleX(0.935);transform-origin:50% 50%">0105000001</div>
<div class="t" style="left:796.8499999999999px;width:600px;top:625.52px;height:30px;line-height:30px;font-size:17.7px;color:#606266;font-weight:normal;text-align:center;">机器人</div>
<div class="t" style="left:1407.8px;width:600px;top:625.52px;height:30px;line-height:30px;font-size:17.7px;color:#606266;font-weight:normal;text-align:center;">台</div>
<div class="t" style="left:1852.4px;top:625.52px;height:30px;line-height:30px;font-size:15.3px;color:#1890ff;font-weight:normal;">选择</div>
<div class="t" style="left:1900px;top:625.52px;height:30px;line-height:30px;font-size:15.3px;color:#67c23a;font-weight:normal;">查看</div>
<div class="t" style="left:468.70000000000005px;width:600px;top:668.64px;height:30px;line-height:30px;font-size:18.6px;color:#606266;text-align:center;transform:scaleX(0.935);transform-origin:50% 50%">0104000001</div>
<div class="t" style="left:796.8499999999999px;width:600px;top:668.44px;height:30px;line-height:30px;font-size:17.7px;color:#606266;font-weight:normal;text-align:center;">保存箱拉杆</div>
<div class="t" style="left:1183.55px;width:600px;top:668.44px;height:30px;line-height:30px;font-size:17.7px;color:#606266;font-weight:normal;text-align:center;">lx-001</div>
<div class="t" style="left:1407.8px;width:600px;top:668.44px;height:30px;line-height:30px;font-size:17.7px;color:#606266;font-weight:normal;text-align:center;">台</div>
<div class="t" style="left:1852.4px;top:668.44px;height:30px;line-height:30px;font-size:15.3px;color:#1890ff;font-weight:normal;">选择</div>
<div class="t" style="left:1900px;top:668.44px;height:30px;line-height:30px;font-size:15.3px;color:#67c23a;font-weight:normal;">查看</div>
<div class="t" style="left:468.70000000000005px;width:600px;top:711.54px;height:30px;line-height:30px;font-size:18.6px;color:#606266;text-align:center;transform:scaleX(0.935);transform-origin:50% 50%">0106000009</div>
<div class="t" style="left:796.8499999999999px;width:600px;top:711.34px;height:30px;line-height:30px;font-size:17.7px;color:#606266;font-weight:normal;text-align:center;">电脑20260105</div>
<div class="t" style="left:1407.8px;width:600px;top:711.34px;height:30px;line-height:30px;font-size:17.7px;color:#606266;font-weight:normal;text-align:center;">台</div>
<div class="t" style="left:1852.4px;top:711.34px;height:30px;line-height:30px;font-size:15.3px;color:#1890ff;font-weight:normal;">选择</div>
<div class="t" style="left:1900px;top:711.34px;height:30px;line-height:30px;font-size:15.3px;color:#67c23a;font-weight:normal;">查看</div>
<div class="t" style="left:468.70000000000005px;width:600px;top:754.46px;height:30px;line-height:30px;font-size:18.6px;color:#606266;text-align:center;transform:scaleX(0.935);transform-origin:50% 50%">0109000005</div>
<div class="t" style="left:796.8499999999999px;width:600px;top:754.46px;height:30px;line-height:30px;font-size:18.6px;color:#606266;text-align:center;transform:scaleX(0.935);transform-origin:50% 50%">1231312</div>
<div class="t" style="left:1183.55px;width:600px;top:754.46px;height:30px;line-height:30px;font-size:18.6px;color:#606266;text-align:center;transform:scaleX(0.935);transform-origin:50% 50%">1231</div>
<div class="t" style="left:1407.8px;width:600px;top:754.25px;height:30px;line-height:30px;font-size:17.7px;color:#606266;font-weight:normal;text-align:center;">吨</div>
<div class="t" style="left:1852.4px;top:754.25px;height:30px;line-height:30px;font-size:15.3px;color:#1890ff;font-weight:normal;">选择</div>
<div class="t" style="left:1900px;top:754.25px;height:30px;line-height:30px;font-size:15.3px;color:#67c23a;font-weight:normal;">查看</div>
<div class="t" style="left:468.70000000000005px;width:600px;top:797.37px;height:30px;line-height:30px;font-size:18.6px;color:#606266;text-align:center;transform:scaleX(0.935);transform-origin:50% 50%">0100000004</div>
<div class="t" style="left:796.8499999999999px;width:600px;top:797.17px;height:30px;line-height:30px;font-size:17.7px;color:#606266;font-weight:normal;text-align:center;">cp001</div>
<div class="t" style="left:1407.8px;width:600px;top:797.17px;height:30px;line-height:30px;font-size:17.7px;color:#606266;font-weight:normal;text-align:center;">千米</div>
<div class="t" style="left:1852.4px;top:797.17px;height:30px;line-height:30px;font-size:15.3px;color:#1890ff;font-weight:normal;">选择</div>
<div class="t" style="left:1900px;top:797.17px;height:30px;line-height:30px;font-size:15.3px;color:#67c23a;font-weight:normal;">查看</div>
<div class="t" style="left:468.70000000000005px;width:600px;top:840.27px;height:30px;line-height:30px;font-size:18.6px;color:#606266;text-align:center;transform:scaleX(0.935);transform-origin:50% 50%">0100000005</div>
<div class="t" style="left:796.8499999999999px;width:600px;top:840.27px;height:30px;line-height:30px;font-size:18.6px;color:#606266;text-align:center;transform:scaleX(0.935);transform-origin:50% 50%">88888</div>
<div class="t" style="left:1407.8px;width:600px;top:840.07px;height:30px;line-height:30px;font-size:17.7px;color:#606266;font-weight:normal;text-align:center;">台</div>
<div class="t" style="left:1852.4px;top:840.07px;height:30px;line-height:30px;font-size:15.3px;color:#1890ff;font-weight:normal;">选择</div>
<div class="t" style="left:1900px;top:840.07px;height:30px;line-height:30px;font-size:15.3px;color:#67c23a;font-weight:normal;">查看</div>
<div class="t" style="left:468.70000000000005px;width:600px;top:883.19px;height:30px;line-height:30px;font-size:18.6px;color:#606266;text-align:center;transform:scaleX(0.935);transform-origin:50% 50%">0101000003</div>
<div class="t" style="left:796.8499999999999px;width:600px;top:883.19px;height:30px;line-height:30px;font-size:18.6px;color:#606266;text-align:center;transform:scaleX(0.935);transform-origin:50% 50%">5</div>
<div class="t" style="left:1407.8px;width:600px;top:882.99px;height:30px;line-height:30px;font-size:17.7px;color:#606266;font-weight:normal;text-align:center;">千克</div>
<div class="t" style="left:1852.4px;top:882.99px;height:30px;line-height:30px;font-size:15.3px;color:#1890ff;font-weight:normal;">选择</div>
<div class="t" style="left:1900px;top:882.99px;height:30px;line-height:30px;font-size:15.3px;color:#67c23a;font-weight:normal;">查看</div>
<div class="t" style="left:468.70000000000005px;width:600px;top:926.10px;height:30px;line-height:30px;font-size:18.6px;color:#606266;text-align:center;transform:scaleX(0.935);transform-origin:50% 50%">0100000006</div>
<div class="t" style="left:796.8499999999999px;width:600px;top:925.90px;height:30px;line-height:30px;font-size:17.7px;color:#606266;font-weight:normal;text-align:center;">测试机器</div>
<div class="t" style="left:1407.8px;width:600px;top:925.90px;height:30px;line-height:30px;font-size:17.7px;color:#606266;font-weight:normal;text-align:center;">套</div>
<div class="t" style="left:1852.4px;top:925.90px;height:30px;line-height:30px;font-size:15.3px;color:#1890ff;font-weight:normal;">选择</div>
<div class="t" style="left:1900px;top:925.90px;height:30px;line-height:30px;font-size:15.3px;color:#67c23a;font-weight:normal;">查看</div>
<div class="t" style="left:468.70000000000005px;width:600px;top:969.00px;height:30px;line-height:30px;font-size:18.6px;color:#606266;text-align:center;transform:scaleX(0.935);transform-origin:50% 50%">0105000003</div>
<div class="t" style="left:796.8499999999999px;width:600px;top:968.80px;height:30px;line-height:30px;font-size:17.7px;color:#606266;font-weight:normal;text-align:center;">家庭机器人</div>
<div class="t" style="left:1183.55px;width:600px;top:969.00px;height:30px;line-height:30px;font-size:18.6px;color:#606266;text-align:center;transform:scaleX(0.935);transform-origin:50% 50%">150</div>
<div class="t" style="left:1407.8px;width:600px;top:968.80px;height:30px;line-height:30px;font-size:17.7px;color:#606266;font-weight:normal;text-align:center;">吨</div>
<div class="t" style="left:1852.4px;top:968.80px;height:30px;line-height:30px;font-size:15.3px;color:#1890ff;font-weight:normal;">选择</div>
<div class="t" style="left:1900px;top:968.80px;height:30px;line-height:30px;font-size:15.3px;color:#67c23a;font-weight:normal;">查看</div>
<div class="t" style="left:468.70000000000005px;width:600px;top:1011.91px;height:30px;line-height:30px;font-size:18.6px;color:#606266;text-align:center;transform:scaleX(0.935);transform-origin:50% 50%">0101000004</div>
<div class="t" style="left:796.8499999999999px;width:600px;top:1011.91px;height:30px;line-height:30px;font-size:18.6px;color:#606266;text-align:center;transform:scaleX(0.935);transform-origin:50% 50%">22</div>
<div class="t" style="left:1407.8px;width:600px;top:1011.71px;height:30px;line-height:30px;font-size:17.7px;color:#606266;font-weight:normal;text-align:center;">台</div>
<div class="t" style="left:1852.4px;top:1011.71px;height:30px;line-height:30px;font-size:15.3px;color:#1890ff;font-weight:normal;">选择</div>
<div class="t" style="left:1900px;top:1011.71px;height:30px;line-height:30px;font-size:15.3px;color:#67c23a;font-weight:normal;">查看</div>
<div class="a" style="left:600px;top:98.6px;width:1200.00px;height:565.20px;background:#fff;border-radius:3px;box-shadow:0 1px 4px rgba(0,0,0,.30)"></div>
<svg class="a" style="left:1758.5px;top:130px;" width="11.5" height="11.5" viewBox="0 0 11.5 11.5"><path d="M0 0 L11.5 11.5 M11.5 0 L0 11.5" stroke="#909399" stroke-width="1.4"/></svg>
<div class="t" style="right:1631px;top:147.40px;height:30px;line-height:30px;font-size:17.7px;color:#606266;font-weight:normal;text-align:right;">分类信息</div>
<div class="a" style="left:786.4px;top:141.3px;width:986.60px;height:43.00px;background:#f5f7fa;border:2px solid #e1e5ec;border-radius:5px"></div>
<div class="t" style="left:808.8px;top:147.80px;height:30px;line-height:30px;font-size:17.7px;color:#1890ff;font-weight:normal;">成品 / 纸杯机</div>
<svg class="a" style="left:1743.8px;top:160px;" width="12.8" height="6.7" viewBox="0 0 12.8 6.7"><path d="M0 0 L6.4 6.4 L12.8 0" fill="none" stroke="#c0c4cc" stroke-width="1.3"/></svg>
<div class="t" style="right:1631px;top:204.20px;height:30px;line-height:30px;font-size:17.7px;color:#606266;font-weight:normal;text-align:right;">物料编码</div>
<div class="a" style="left:786.4px;top:198.5px;width:412.80px;height:43.10px;background:#f5f7fa;border:2px solid #e1e5ec;border-radius:5px"></div>
<div class="t" style="left:808.8px;top:205.20px;height:30px;line-height:30px;font-size:18.6px;color:#303133;transform:scaleX(0.935);transform-origin:0 50%">0101000001</div>
<div class="t" style="right:1056.6px;top:204.70px;height:30px;line-height:30px;font-size:17.7px;color:#606266;font-weight:normal;text-align:right;">更新时间</div>
<div class="a" style="left:1360.7px;top:198.5px;width:412.30px;height:43.10px;background:#f5f7fa;border:2px solid #e1e5ec;border-radius:5px"></div>
<div class="t" style="left:1383px;top:205.20px;height:30px;line-height:30px;font-size:18.6px;color:#303133;transform:scaleX(0.935);transform-origin:0 50%">2026-01-14 14:48:46</div>
<div class="t" style="right:1631px;top:260.20px;height:30px;line-height:30px;font-size:17.7px;color:#606266;font-weight:normal;text-align:right;">物料名称</div>
<div class="a" style="left:786.4px;top:254.6px;width:412.80px;height:41.90px;background:#f5f7fa;border:2px solid #e1e5ec;border-radius:5px"></div>
<div class="t" style="left:808.8px;top:260.60px;height:30px;line-height:30px;font-size:17.7px;color:#303133;font-weight:normal;">118S ZY型纸杯机</div>
<div class="t" style="right:742px;top:260.70px;height:30px;line-height:30px;font-size:17.7px;color:#606266;font-weight:normal;text-align:right;">允许负库存</div>
<div class="a" style="left:1674px;top:265px;width:79.80px;height:24.80px;background:#e9ebf0;border-radius:13px"></div>
<div class="a" style="left:1678px;top:267px;width:21px;height:21px;border-radius:50%;background:#fff"></div>
<div class="t" style="right:1631px;top:316.20px;height:30px;line-height:30px;font-size:17.7px;color:#606266;font-weight:normal;text-align:right;">主计量</div>
<div class="a" style="left:786.4px;top:310.7px;width:251.30px;height:42.20px;background:#f5f7fa;border:2px solid #e1e5ec;border-radius:5px"></div>
<div class="t" style="left:808.8px;top:316.80px;height:30px;line-height:30px;font-size:17.7px;color:#303133;font-weight:normal;">台</div>
<svg class="a" style="left:1006.9px;top:328px;" width="13.2" height="7" viewBox="0 0 13.2 7"><path d="M0 0 L6.6 6.6 L13.2 0" fill="none" stroke="#c0c4cc" stroke-width="1.3"/></svg>
<div class="t" style="right:1631px;top:373.60px;height:30px;line-height:30px;font-size:17.7px;color:#606266;font-weight:normal;text-align:right;">型号规格</div>
<div class="a" style="left:786.4px;top:367.1px;width:412.80px;height:42.40px;background:#f5f7fa;border:2px solid #e1e5ec;border-radius:5px"></div>
<div class="t" style="left:808.8px;top:373.80px;height:30px;line-height:30px;font-size:17.7px;color:#303133;font-weight:normal;">ZY型</div>
<div class="t" style="right:1631px;top:429.50px;height:30px;line-height:30px;font-size:17.7px;color:#606266;font-weight:normal;text-align:right;">规格描述</div>
<div class="a" style="left:786.4px;top:425px;width:412.80px;height:41.00px;background:#f5f7fa;border:2px solid #e1e5ec;border-radius:5px"></div>
<div class="a" style="left:625.7px;top:477.2px;width:1128.30px;height:145.50px;background:#fff;border-radius:8px;box-shadow:0 2px 14px rgba(0,0,0,.09)"></div>
<div class="t" style="right:1570.5px;top:506.40px;height:30px;line-height:30px;font-size:17.7px;color:#606266;font-weight:normal;text-align:right;">当前库存数量</div>
<div class="a" style="left:846.7px;top:500.5px;width:342.40px;height:42.80px;background:#f5f7fa;border:2px solid #e1e5ec;border-radius:5px"></div>
<div class="t" style="left:868.7px;top:507.20px;height:30px;line-height:30px;font-size:18.6px;color:#1890ff;transform:scaleX(0.935);transform-origin:0 50%">2137.0000</div>
<div class="t" style="right:1570.5px;top:562.40px;height:30px;line-height:30px;font-size:17.7px;color:#606266;font-weight:normal;text-align:right;">锁定库存数量</div>
<div class="a" style="left:846.7px;top:557.5px;width:342.40px;height:41.80px;background:#f5f7fa;border:2px solid #e1e5ec;border-radius:5px"></div>
<div class="t" style="left:868.7px;top:563.20px;height:30px;line-height:30px;font-size:18.6px;color:#303133;transform:scaleX(0.935);transform-origin:0 50%">150012.0000</div>
<div class="t" style="right:1026.4px;top:506.40px;height:30px;line-height:30px;font-size:17.7px;color:#606266;font-weight:normal;text-align:right;">实际可用数量</div>
<div class="a" style="left:1390.7px;top:500.5px;width:342.00px;height:42.80px;background:#f5f7fa;border:2px solid #e1e5ec;border-radius:5px"></div>
<div class="t" style="left:1412.4px;top:507.20px;height:30px;line-height:30px;font-size:18.6px;color:#13ce66;transform:scaleX(0.935);transform-origin:0 50%">-147875.0000</div>
<div class="t" style="right:1026.4px;top:562.40px;height:30px;line-height:30px;font-size:17.7px;color:#606266;font-weight:normal;text-align:right;">在途库存数量</div>
<div class="a" style="left:1390.7px;top:557.5px;width:342.00px;height:41.80px;background:#f5f7fa;border:2px solid #e1e5ec;border-radius:5px"></div>
<div class="t" style="left:1412.4px;top:563.20px;height:30px;line-height:30px;font-size:18.6px;color:#303133;transform:scaleX(0.935);transform-origin:0 50%">0.0000</div>
</body></html>
